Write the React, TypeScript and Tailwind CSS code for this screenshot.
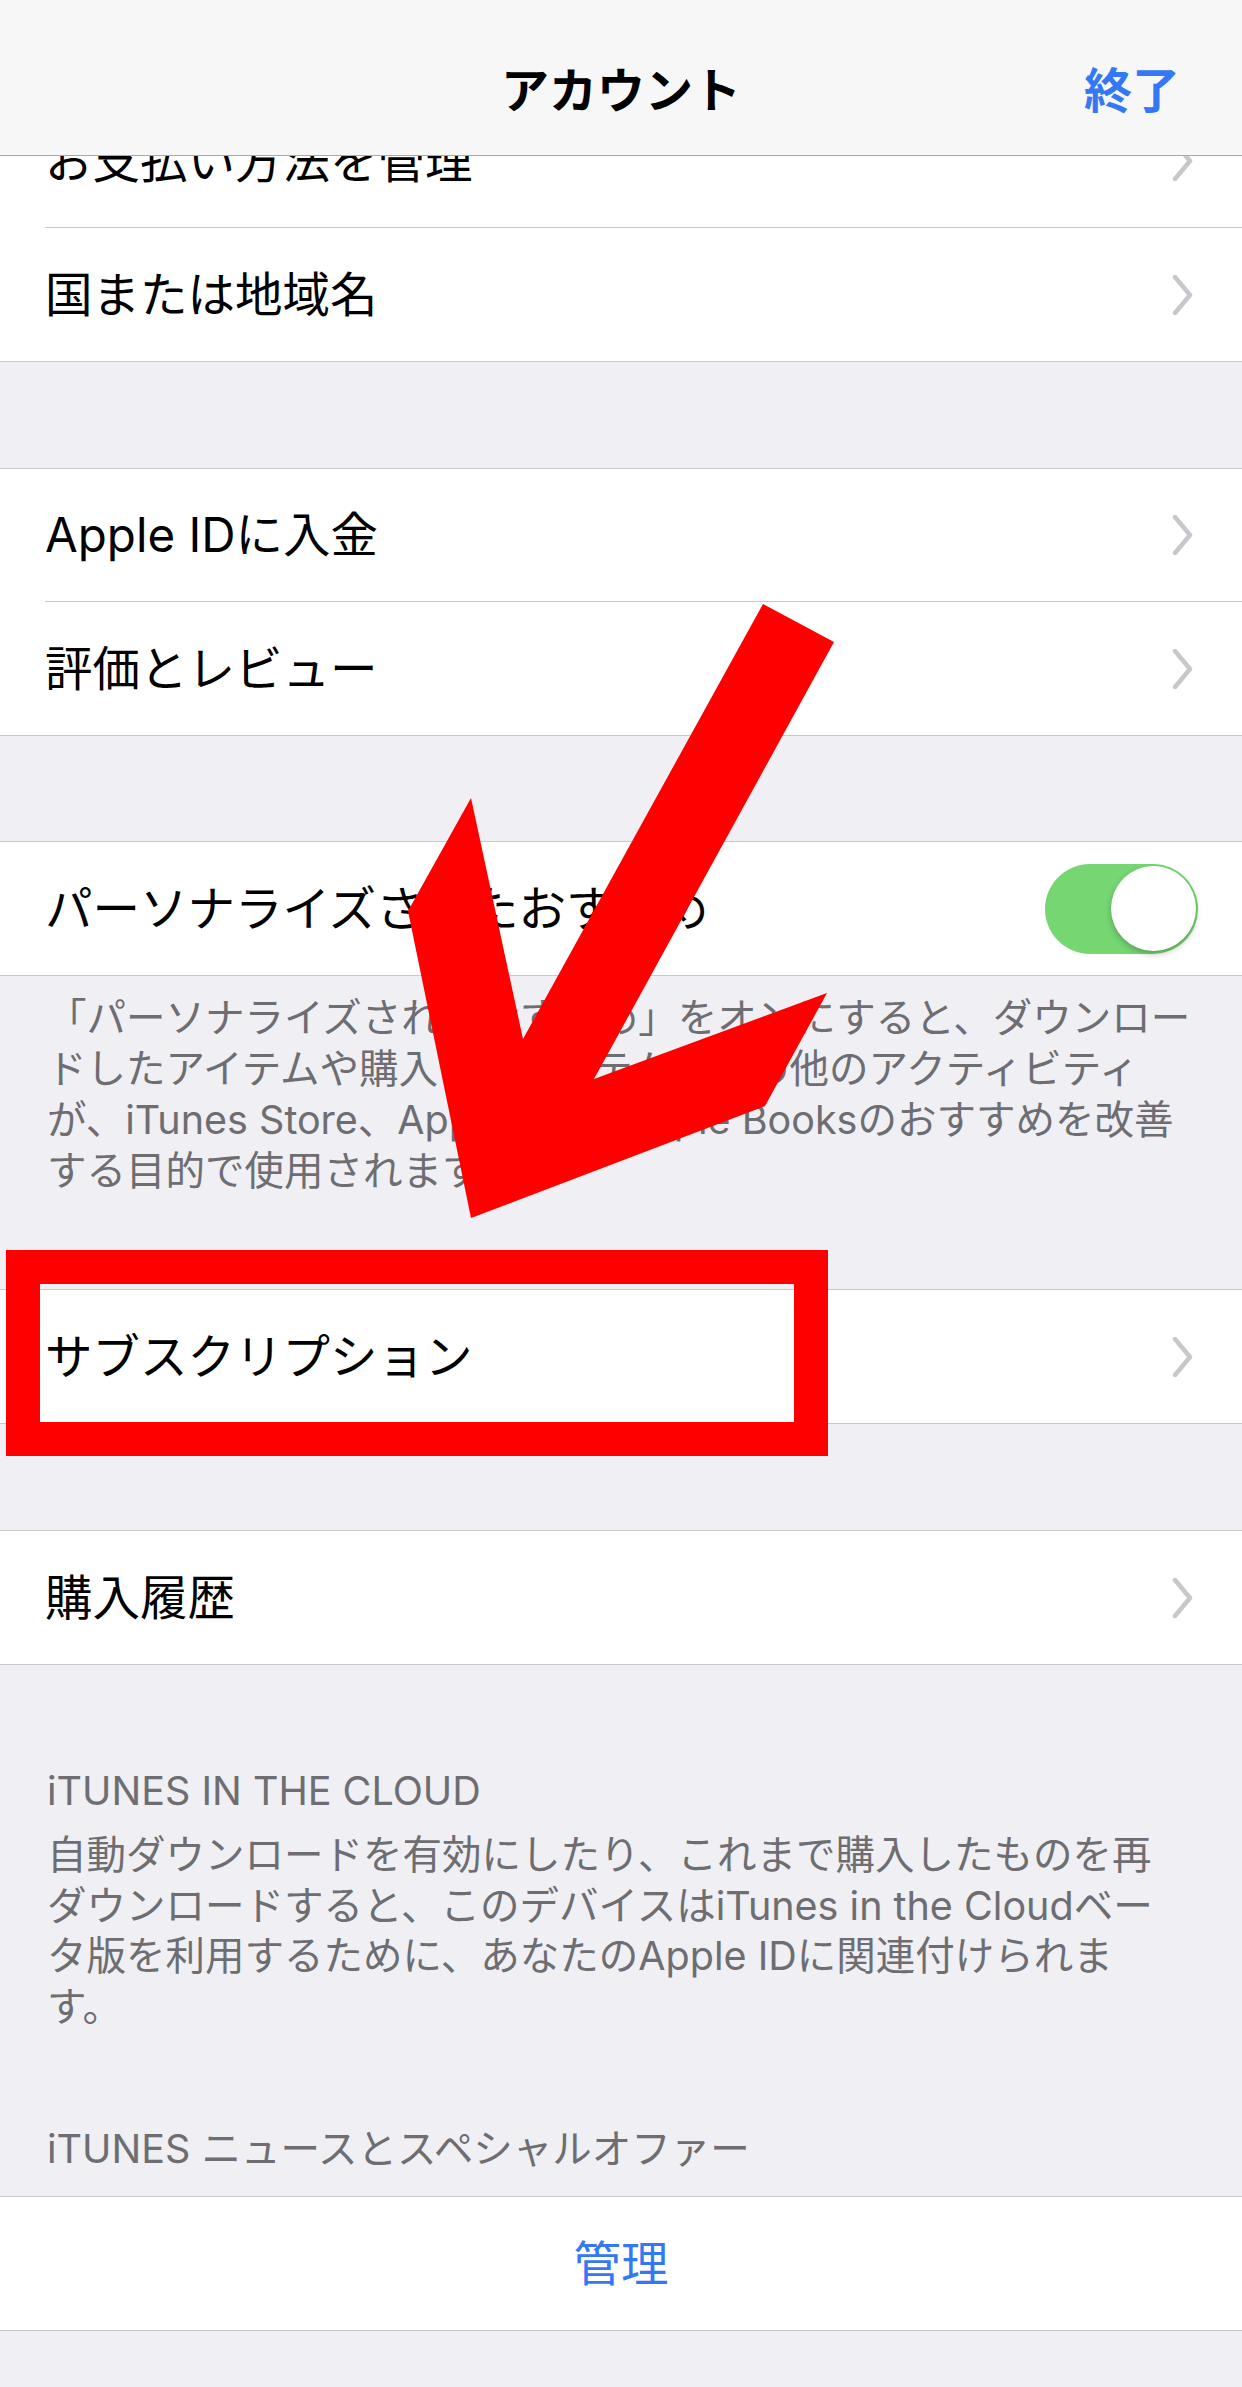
import React from 'react';

const font = { fontFamily: 'Inter, "Noto Sans CJK JP", sans-serif' };

const Chevron = () => (
  <svg width="22" height="40" viewBox="0 0 22 40" className="shrink-0">
    <polyline points="3,2 18,20 3,38" fill="none" stroke="#c7c7cc" strokeWidth="4.5" strokeLinecap="round" strokeLinejoin="round" />
  </svg>
);

interface RowProps {
  label: string;
  last?: boolean;
  right?: React.ReactNode;
}

// one table cell; inset separator unless it is the last one of its group
const Row: React.FC<RowProps> = ({ label, last, right }) => (
  <div className="bg-white pl-[45px]">
    <div className={`h-[133px] flex items-center justify-between pr-[48px] ${last ? '' : 'border-b border-[#c8c7cc]'}`}>
      <span className="text-[47.5px] text-black whitespace-nowrap">{label}</span>
      {right ?? <Chevron />}
    </div>
  </div>
);

const Group: React.FC<{ children: React.ReactNode }> = ({ children }) => (
  <div className="border-y border-[#c8c7cc]">{children}</div>
);

const Toggle = () => (
  <div className="w-[153px] h-[90px] rounded-full bg-[#76d672] flex items-center justify-end pr-[2px] -mr-[4px]">
    <div className="w-[85px] h-[85px] rounded-full bg-white shadow-[0_3px_6px_rgba(0,0,0,0.25)]" />
  </div>
);

export default function App() {
  return (
    <div className="relative w-[1242px] h-[2387px] bg-[#efeff4] overflow-hidden" style={font}>
      {/* nav bar */}
      <div className="h-[156px] bg-[#f7f7f7] border-b border-[#a9a9ad] flex items-end pb-[28px] relative">
        <div className="flex-1 text-center text-[48px] font-semibold text-black">アカウント</div>
        <div className="absolute right-[62px] bottom-[28px] text-[48px] font-semibold text-[#3478f6]">終了</div>
      </div>

      {/* scrolled group: first row half hidden under the bar */}
      <div className="border-b border-[#c8c7cc]">
        <div className="h-[72px] overflow-hidden">
          <div className="-mt-[61px]">
            <Row label="お支払い方法を管理" />
          </div>
        </div>
        <Row label="国または地域名" last />
      </div>

      <div className="h-[106px]" />
      <Group>
        <Row label="Apple IDに入金" />
        <Row label="評価とレビュー" last />
      </Group>

      <div className="h-[105px]" />
      <Group>
        <Row label="パーソナライズされたおすすめ" last right={<Toggle />} />
      </Group>
      <div className="pt-[17px] pl-[47px] text-[39.5px] leading-[51px] text-[#6d6d72] whitespace-nowrap">
        <div>「パーソナライズされたおすすめ」をオンにすると、ダウンロー</div>
        <div>ドしたアイテムや購入したアイテム、その他のアクティビティ</div>
        <div>が、iTunes Store、App Store、Apple Booksのおすすめを改善</div>
        <div>する目的で使用されます。</div>
      </div>

      <div className="h-[92px]" />
      <div className="relative">
        <Group>
          <Row label="サブスクリプション" last />
        </Group>
        {/* red annotation frame */}
        <div className="absolute left-[6px] -top-[39px] w-[822px] h-[206px] border-[34px] border-[#ff0000]" />
      </div>

      <div className="h-[106px]" />
      <Group>
        <Row label="購入履歴" last />
      </Group>

      <div className="pt-[101px] pl-[47px] text-[39.5px] leading-[50px] text-[#6d6d72] whitespace-nowrap">
        <div className="mb-[14px]">iTUNES IN THE CLOUD</div>
        <div className="leading-[50.5px]">
          <div>自動ダウンロードを有効にしたり、これまで購入したものを再</div>
          <div>ダウンロードすると、このデバイスはiTunes in the Cloudベー</div>
          <div>タ版を利用するために、あなたのApple IDに関連付けられま</div>
          <div>す。</div>
        </div>
        <div className="mt-[92px]">iTUNES ニュースとスペシャルオファー</div>
      </div>

      <div className="h-[22px]" />
      <Group>
        <div className="h-[133px] bg-white flex items-center justify-center text-[47.5px] text-[#3478f6]">管理</div>
      </Group>

      {/* red annotation arrow */}
      <svg className="absolute inset-0 pointer-events-none" width="1242" height="2387" viewBox="0 0 1242 2387">
        <polygon
          fill="#ff0000"
          points="763,604 834,642 594,1079 827,993 765,1106 471,1218 408,911 471,798 523,1039"
        />
      </svg>
    </div>
  );
}
